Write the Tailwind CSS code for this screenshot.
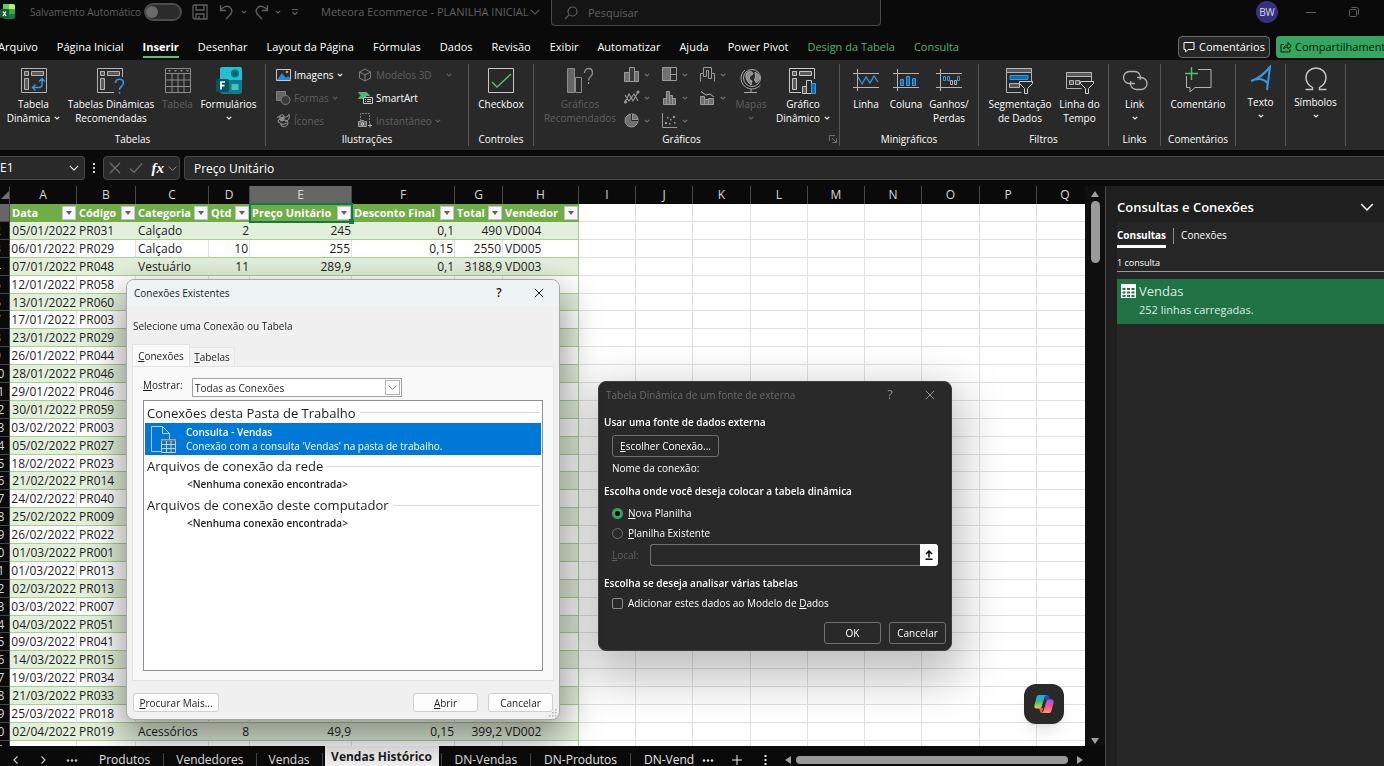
<!DOCTYPE html>
<html lang="pt-BR">
<head>
    <meta charset="UTF-8"/>
    <meta name="viewport" content="width=device-width, initial-scale=1.0"/>
    <title>Meteora Ecommerce - PLANILHA INICIAL</title>
    <script src="https://cdn.jsdelivr.net/npm/@tailwindcss/browser@4"></script>
</head>
<body class="h-screen flex flex-col overflow-hidden bg-[#0a0a0a] text-white text-[11px] leading-[14px] font-['Open_Sans','Noto_Sans',sans-serif]">

<!-- Símbolos reutilizados -->
<svg class="hidden">
    <symbol id="chev" viewBox="0 0 6 6"><path d="M.8 1.8 3 4 5.2 1.8" fill="none" stroke="currentColor" stroke-width="1.2"/></symbol>
    <symbol id="chevGrande" viewBox="0 0 12 12"><path d="M1 3.5 6 8.5 11 3.5" fill="none" stroke="currentColor" stroke-width="1.3"/></symbol>
    <symbol id="fechar" viewBox="0 0 12 12"><path d="M1 1 11 11M11 1 1 11" fill="none" stroke="currentColor" stroke-width="1.2"/></symbol>
</svg>

<!-- Barra de título -->
<header class="flex shrink-0 h-7 text-[#606060]">
    <div class="w-[551px] h-6 shrink-0 flex items-center">
        <svg class="w-4 h-4" viewBox="0 0 16 16">
            <rect x="3" y="0" width="12" height="15" rx="2" fill="#107c41"/>
            <path d="M3 0h6v5H3z" fill="#5ccb5a"/><path d="M9 0h4a2 2 0 0 1 2 2v3H9z" fill="#b9f06f"/>
            <path d="M9 5h6v5H9z" fill="#3aa64c"/>
            <rect x="0" y="5" width="9" height="9" rx="1.5" fill="#185c37"/>
            <path d="M3 7.5 6 12M6 7.5 3 12" stroke="#fff" stroke-width="1.3"/>
        </svg>
        <span class="ml-[14px] w-[110px] whitespace-nowrap text-[10px]">Salvamento Automático</span>
        <button class="ml-1 w-[38px] h-[18px] rounded-full border-2 border-[#4b4b4b] bg-[#2b2b2b] flex items-center" aria-label="Salvamento Automático">
            <span class="w-3 h-3 rounded-full bg-[#6b6b6b]"></span>
        </button>
        <button class="ml-[10px]" aria-label="Salvar">
            <svg class="w-4 h-4" viewBox="0 0 16 16" fill="none" stroke="currentColor" stroke-width="1.3"><path d="M1 2.5A1.5 1.5 0 0 1 2.500 1h12.500v14H2.500L1 13.500zM4 1v5h8V1M4 15v-5h8v5M7 12v3"/></svg>
        </button>
        <button class="ml-[11px] flex items-center gap-2" aria-label="Desfazer">
            <svg class="w-[14px] h-4" viewBox="0 0 14 16" fill="none" stroke="currentColor" stroke-width="1.4"><path d="M1.500 1v5.500H7M1.500 6.500C4 2.500 8 1 11 3.500s2 5.500 0 7.500l-4 4"/></svg>
            <svg class="w-[6px] h-[6px]"><use href="#chev"/></svg>
        </button>
        <button class="ml-2 flex items-center gap-[6px]" aria-label="Refazer">
            <svg class="w-[14px] h-4" viewBox="0 0 14 16" fill="none" stroke="currentColor" stroke-width="1.4"><path d="M12.500 1v5.500H7M12.500 6.500C10 2.500 6 1 3 3.500s-2 5.500 0 7.500l4 4"/></svg>
            <svg class="w-[6px] h-[6px]"><use href="#chev"/></svg>
        </button>
        <button class="ml-[10px]" aria-label="Personalizar">
            <svg class="w-2 h-2" viewBox="0 0 8 8" fill="none" stroke="currentColor" stroke-width="1.2"><path d="M1 1.500h6M1.500 4 4 6.500 6.500 4"/></svg>
        </button>
        <button class="ml-[22px] flex items-center gap-[2px] whitespace-nowrap">Meteora Ecommerce - PLANILHA INICIAL
            <svg class="w-[10px] h-[10px]"><use href="#chevGrande"/></svg>
        </button>
    </div>
    <label class="w-[330px] h-[26px] shrink-0 flex items-center gap-[10px] px-3 rounded-b-sm border border-t-0 border-[#484848] bg-[#141414]">
        <svg class="w-[14px] h-[14px]" viewBox="0 0 14 14" fill="none" stroke="currentColor" stroke-width="1.200"><circle cx="8.500" cy="5.500" r="4.500"/><path d="M5.300 8.700 1 13"/></svg>
        <input class="flex-1 outline-none text-[11px] placeholder:text-[#606060]" placeholder="Pesquisar" aria-label="Pesquisar"/>
    </label>
    <div class="h-6 ml-auto pr-[25px] flex items-center">
        <span class="w-[22px] h-[22px] rounded-full bg-[#37317a] text-[#d8d8f0] text-[10px] flex items-center justify-center">BW</span>
        <button class="ml-7 w-[10px] h-[10px] flex items-center" aria-label="Minimizar"><span class="w-full h-px bg-[#606060]"></span></button>
        <button class="ml-[33px]" aria-label="Restaurar">
            <svg class="w-[10px] h-[10px]" viewBox="0 0 10 10" fill="none" stroke="currentColor"><rect x=".5" y="2.500" width="7" height="7" rx="1"/><path d="M2.500.5h5a2 2 0 0 1 2 2v5"/></svg>
        </button>
    </div>
</header>

<!-- Guias da faixa de opções -->
<nav class="flex shrink-0 h-8 pt-[6px] items-center whitespace-nowrap text-[11px]">
    <div class="flex-1 min-w-0 flex items-center gap-[19px] -ml-[2px]">
        <a href="#">Arquivo</a>
        <a href="#">Página Inicial</a>
        <a href="#" class="font-bold border-b-2 border-[#54c382] pb-[2px] pt-1">Inserir</a>
        <a href="#">Desenhar</a>
        <a href="#">Layout da Página</a>
        <a href="#">Fórmulas</a>
        <a href="#">Dados</a>
        <a href="#">Revisão</a>
        <a href="#">Exibir</a>
        <a href="#">Automatizar</a>
        <a href="#">Ajuda</a>
        <a href="#">Power Pivot</a>
        <a href="#" class="text-[#4fb477]">Design da Tabela</a>
        <a href="#" class="text-[#4fb477]">Consulta</a>
    </div>
    <button class="w-[92px] h-[22px] rounded-sm border border-[#6a6a6a] bg-[#262626] flex items-center justify-center gap-1">
        <svg class="w-3 h-3" viewBox="0 0 12 12" fill="none" stroke="currentColor"><path d="M1 1.500h10v7H5L2.500 11V8.500H1z"/></svg>
        Comentários
    </button>
    <button class="ml-[6px] w-[108px] h-[22px] pl-1 rounded-l-sm bg-[#36a55f] text-[#06200f] flex items-center gap-[3px] overflow-hidden">
        <svg class="w-3 h-3 shrink-0" viewBox="0 0 12 12" fill="none" stroke="currentColor"><path d="M4 3.500H1v7.500h9V8M3.500 8c.5-3 2.500-4 4.500-4V1.500L11.300 5 8 8V6C6 6 4.500 6.500 3.500 8z"/></svg>
        Compartilhamento
    </button>
</nav>

<!-- Faixa de opções -->
<section class="flex shrink-0 h-[90px] bg-[#292929] py-1 text-center text-[10px] whitespace-nowrap">
    <div class="w-[266px] shrink-0 flex flex-col border-r border-[#565656]">
        <div class="flex flex-1 pt-[3px]">
            <button class="w-[67px] flex flex-col items-center">
                <svg class="w-[26px] h-[27px] mb-[3px]" viewBox="0 0 26 27" fill="none" stroke="#b4b4b4"><path d="M.5 1.500h25v24H.5z"/><path d="M3.500 4.500h4v4h-4zM10.500 4.500h12v4h-12zM3.500 11.500h4v11h-4z" fill="#5a5a5a"/><path d="M12 20.500h6a3 3 0 0 0 3-3v-5.500M14.500 17.500 11.500 20.500l3 3M18 14.500l3-3 3 3" stroke="#3a96dd" stroke-width="1.400"/></svg>
                <span>Tabela</span>
                <span class="flex items-center gap-1">Dinâmica <svg class="w-[6px] h-[6px]"><use href="#chev"/></svg></span>
            </button>
            <button class="w-[88px] flex flex-col items-center">
                <svg class="w-[28px] h-[27px] mb-[3px]" viewBox="0 0 28 27" fill="none" stroke="#b4b4b4"><path d="M17 25.500H.5v-24h25V10"/><path d="M3.500 4.500h4v4h-4zM10.500 4.500h12v4h-12zM3.500 11.500h4v11h-4z" fill="#5a5a5a"/><path d="M18.500 16c0-5 8-5 8 0 0 3-4 3.500-4 7M22.500 25v1.800" stroke="#3a96dd" stroke-width="1.600"/></svg>
                <span>Tabelas Dinâmicas</span>
                <span>Recomendadas</span>
            </button>
            <button class="w-[45px] flex flex-col items-center text-[#606060]">
                <svg class="w-[26px] h-[27px] mb-[3px]" viewBox="0 0 26 27" fill="none" stroke="#8c8c8c"><path d="M.5 1.500h25v24H.5zM.5 6.500h25M.5 13h25M.5 19.500h25M7 6.500v19M13 6.500v19M19 6.500v19"/><path d="M3 3h3L4.500 5zM9 3h3l-1.500 2zM15 3h3l-1.500 2zM21 3h3l-1.500 2z" fill="#8c8c8c" stroke="none"/></svg>
                <span>Tabela</span>
            </button>
            <button class="w-[57px] flex flex-col items-center">
                <svg class="w-[26px] h-[27px] mb-[3px]" viewBox="0 0 26 27"><rect x="4" y="0" width="22" height="27" rx="2.500" fill="#17788a"/><path d="M4 13V2.500A2.500 2.500 0 0 1 6.500 0h17A2.500 2.500 0 0 1 26 2.500V13z" fill="#25c0d0"/><circle cx="19" cy="6.500" r="4" fill="#0f7584"/><circle cx="19" cy="6.500" r="2" fill="#0b5967"/><rect x="15.500" y="17" width="7" height="6" fill="#3bc9c0"/><rect x="0" y="12" width="13" height="13" rx="1.500" fill="#0a5262"/><path d="M5 22.500v-7.500h4M5 18.700h3.500" fill="none" stroke="#fff" stroke-width="1.700"/></svg>
                <span>Formulários</span>
                <svg class="w-[6px] h-[6px] mt-1"><use href="#chev"/></svg>
            </button>
        </div>
        <p>Tabelas</p>
    </div>

    <div class="w-[203px] shrink-0 flex flex-col border-r border-[#565656]">
        <div class="flex-1 grid grid-cols-[82px_1fr] grid-rows-3 pl-[10px]">
            <button class="flex items-center gap-[3px]">
                <svg class="w-[15px] h-3" viewBox="0 0 15 12"><path d="M.5.5h14v11H.5z" fill="#292929" stroke="#c8c8c8"/><path d="M1 11 6 4l4 5 2-2 2.500 3v1z" fill="#2b88d8"/><circle cx="11" cy="3" r="1.300" fill="#f0a030"/></svg>
                Imagens <svg class="w-[6px] h-[6px]"><use href="#chev"/></svg>
            </button>
            <button class="flex items-center gap-1 text-[#606060]">
                <svg class="w-[14px] h-[14px]" viewBox="0 0 14 14" fill="none" stroke="#808080"><path d="M7 1 12.500 4v6L7 13 1.500 10V4zM1.500 4 7 7l5.500-3M7 7v6"/></svg>
                Modelos 3D <svg class="w-[6px] h-[6px] ml-[10px]"><use href="#chev"/></svg>
            </button>
            <button class="flex items-center gap-[3px] text-[#606060]">
                <svg class="w-[15px] h-[14px]" viewBox="0 0 15 14" fill="#3a3a3a" stroke="#808080"><path d="M.5.5h9v9h-9z" fill="#666"/><circle cx="9.500" cy="9" r="4.500"/></svg>
                Formas <svg class="w-[6px] h-[6px]"><use href="#chev"/></svg>
            </button>
            <button class="flex items-center gap-[3px]">
                <svg class="w-[15px] h-3" viewBox="0 0 15 12" fill="none"><path d="M.5.5h8l3 3H8l-1 3H.5L3 3.500z" fill="#4fb477" stroke="#4fb477"/><path d="M5.500 5.500h9v6h-9z" fill="#292929" stroke="#c8c8c8"/><path d="M7 7.500h1M9 7.500h4M7 9.500h1M9 9.500h4" stroke="#c8c8c8"/></svg>
                SmartArt
            </button>
            <button class="flex items-center gap-[3px] text-[#606060]">
                <svg class="w-[15px] h-[15px]" viewBox="0 0 15 15" fill="none" stroke="#8c8c8c" stroke-width="1.100"><path d="M1 4.500 4 3c1-2 4-1.500 4 1 2 1 4-1 5-2.500 1 4-1 6-3.500 7M4 3v3c-2 1-3 3 0 4M6 8c3-2 7 0 5.500 3.500C9 15 5 14 4.500 10.500c1.500 1 4 1 6-.5"/><path d="M8 4c1 2-1 4-3 4L4 5z" fill="#8c8c8c"/></svg>
                Ícones
            </button>
            <button class="flex items-center gap-[3px] text-[#606060]">
                <svg class="w-[15px] h-[15px]" viewBox="0 0 15 15" fill="none" stroke="#808080"><path d="M2.500 8V.5h9V10" stroke-dasharray="2 1"/><path d="M.5 8.500h2l1-1h2l1 1h2v5h-8z" fill="#666" stroke="#a0a0a0"/><circle cx="4.500" cy="11" r="1.300" stroke="#d0d0d0"/><path d="M12 10.500v4M10 12.500h4" stroke="#b0b0b0"/></svg>
                Instantâneo <svg class="w-[6px] h-[6px]"><use href="#chev"/></svg>
            </button>
        </div>
        <p>Ilustrações</p>
    </div>

    <div class="w-[65px] shrink-0 flex flex-col border-r border-[#565656]">
        <div class="flex-1 flex justify-center pt-[3px]">
            <button class="flex flex-col items-center">
                <svg class="w-[26px] h-[27px] mb-[3px]" viewBox="0 0 26 27" fill="none" stroke="#c8c8c8"><path d="M.5 1.500h25v24H.5z"/><path d="M4 15l5 5L23 7" stroke="#4fc36e" stroke-width="1.400"/></svg>
                <span>Checkbox</span>
            </button>
        </div>
        <p>Controles</p>
    </div>

    <div class="w-[306px] shrink-0 flex flex-col border-r border-[#565656]">
        <div class="flex-1 flex pt-[3px] pl-2">
            <button class="w-[76px] flex flex-col items-center text-[#606060]">
                <svg class="w-[26px] h-[27px] mb-[3px]" viewBox="0 0 26 27" fill="#666" stroke="#8c8c8c"><path d="M.5 1.500h7v24h-7z"/><path d="M8.500 10.500h6v15h-6z" fill="none"/><path d="M17.500 6c0-6 8-6 8 0 0 3.500-4 3.500-4 7.500M21.500 15v2" fill="none" stroke-width="1.400"/></svg>
                <span>Gráficos</span>
                <span>Recomendados</span>
            </button>
            <div class="grid grid-cols-3 gap-x-3 gap-y-2 content-start ml-[6px] text-[#707070]">
                <button class="flex items-center gap-1" aria-label="Colunas">
                    <svg class="w-4 h-[15px]" viewBox="0 0 16 15" fill="#3a3a3a" stroke="#9a9a9a"><path d="M.5 5.500h5v9h-5z" fill="#707070"/><path d="M5.500.5h5v14h-5z"/><path d="M10.500 4.500h4v10h-4z" fill="#707070"/></svg>
                    <svg class="w-[6px] h-[6px]"><use href="#chev"/></svg>
                </button>
                <button class="flex items-center gap-1" aria-label="Hierarquia">
                    <svg class="w-4 h-[15px]" viewBox="0 0 16 15" fill="#707070" stroke="#9a9a9a"><path d="M.5.5h8v13h-8z"/><path d="M8.500.5h6v7h-6zM8.500 7.500h6v6h-6z" fill="none"/></svg>
                    <svg class="w-[6px] h-[6px]"><use href="#chev"/></svg>
                </button>
                <button class="flex items-center gap-1" aria-label="Cascata">
                    <svg class="w-4 h-[15px]" viewBox="0 0 16 15" fill="#3a3a3a" stroke="#9a9a9a"><path d="M.5 14.500v-8h3v-6h8v6h3v8M3.500 6.500v3h3v-6h2v8h3v-5" fill="none"/></svg>
                    <svg class="w-[6px] h-[6px]"><use href="#chev"/></svg>
                </button>
                <button class="flex items-center gap-1" aria-label="Linhas">
                    <svg class="w-4 h-[15px]" viewBox="0 0 16 15" fill="none" stroke="#9a9a9a" stroke-width="1.100"><path d="M1 12 5 4l4 7 5-9M1 5l4 6 5-7 4 7"/><circle cx="1.500" cy="12" r="1" fill="#9a9a9a"/><circle cx="14" cy="2" r="1" fill="#9a9a9a"/></svg>
                    <svg class="w-[6px] h-[6px]"><use href="#chev"/></svg>
                </button>
                <button class="flex items-center gap-1" aria-label="Estatística">
                    <svg class="w-4 h-[15px]" viewBox="0 0 16 15" fill="#707070" stroke="#9a9a9a"><path d="M1.500 8.500h3v6h-3zM4.500 1.500h3v13h-3zM7.500 5.500h3v9h-3zM10.500 8.500h3v6h-3z"/></svg>
                    <svg class="w-[6px] h-[6px]"><use href="#chev"/></svg>
                </button>
                <button class="flex items-center gap-1" aria-label="Combinação">
                    <svg class="w-4 h-[15px]" viewBox="0 0 16 15" fill="#707070" stroke="#9a9a9a"><path d="M.5 6.500h4v8h-4zM4.500 9.500h4v5h-4zM8.500 8.500h5v6h-5z"/><path d="M1 1.500 6 5l4-1 4 3" fill="none" stroke="#b4b4b4"/></svg>
                    <svg class="w-[6px] h-[6px]"><use href="#chev"/></svg>
                </button>
                <button class="flex items-center gap-1" aria-label="Pizza">
                    <svg class="w-4 h-[15px]" viewBox="0 0 16 15" fill="#707070" stroke="#9a9a9a"><circle cx="7.500" cy="7.500" r="6.500"/><path d="M7.500 1v6.500H14" fill="none" stroke="#292929"/><path d="M8.500 1A6 6 0 0 1 14 6.500H8.500z"/></svg>
                    <svg class="w-[6px] h-[6px]"><use href="#chev"/></svg>
                </button>
                <button class="flex items-center gap-1" aria-label="Dispersão">
                    <svg class="w-4 h-[15px]" viewBox="0 0 16 15" fill="#9a9a9a"><path d="M.5 0v14.500H15" fill="none" stroke="#9a9a9a"/><path d="M3 9h2v2H3zM5 4h1.500v1.500H5zM8 6h1.500v1.500H8zM7 10h1.500v1.500H7zM11 3h2v2h-2zM12 9h1.500v1.500H12z"/></svg>
                    <svg class="w-[6px] h-[6px]"><use href="#chev"/></svg>
                </button>
            </div>
            <button class="w-[50px] flex flex-col items-center text-[#606060]">
                <svg class="w-[26px] h-[27px] mb-[3px]" viewBox="0 0 26 27" fill="none" stroke="#a8a8a8"><circle cx="14" cy="11" r="8.500"/><path d="M7 3C1 8 2 17 8.500 20.500c5 3 11 1 14-2.500M13 22v3.500M6 25.500h13"/><path d="M8 7c2-3 5-3 6-2l1 2-3 2-1 3 3 2-1 4-3-3-2-4zM17 5l4 3 .5 4-3 4-2-3 1-3z" fill="#8c8c8c"/></svg>
                <span>Mapas</span>
                <svg class="w-[6px] h-[6px] mt-1"><use href="#chev"/></svg>
            </button>
            <button class="w-[54px] flex flex-col items-center">
                <svg class="w-[28px] h-[27px] mb-[3px]" viewBox="0 0 28 27" fill="none" stroke="#c8c8c8"><path d="M12 25.500H.5v-24h25V12"/><path d="M3.500 4.500h4v4h-4zM10.500 4.500h12v4h-12zM3.500 11.500h4v11h-4z" fill="#5a5a5a"/><path d="M13.500 19.500h4v7h-4z" fill="#5a5a5a"/><path d="M17.500 13.500h5v13h-5z" fill="#292929"/><path d="M22.500 16.500h4v10h-4z" fill="#0f6cbd" stroke="#3a96dd"/></svg>
                <span>Gráfico</span>
                <span class="flex items-center gap-1">Dinâmico <svg class="w-[6px] h-[6px]"><use href="#chev"/></svg></span>
            </button>
        </div>
        <div class="flex items-center pr-[2px]">
            <p class="flex-1">Gráficos</p>
            <button aria-label="Mais opções de gráficos"><svg class="w-2 h-2" viewBox="0 0 8 8" fill="none" stroke="#707070"><path d="M.5 6V.5H6M3 3l4 4M7.500 3.500v4h-4"/></svg></button>
        </div>
    </div>

    <div class="w-[139px] shrink-0 flex flex-col border-r border-[#565656]">
        <div class="flex-1 flex pt-[3px] pl-[6px]">
            <button class="w-[40px] flex flex-col items-center">
                <svg class="w-[26px] h-[27px] mb-[3px]" viewBox="0 0 26 27" fill="none" stroke="#b4b4b4"><path d="M0 6.500h26M0 20.500h26M4.500 2v22"/><path d="M5 10l4 7 4-7 4 6 4-7 4 6" stroke="#3a96dd" stroke-width="1.300"/></svg>
                <span>Linha</span>
            </button>
            <button class="w-[40px] flex flex-col items-center">
                <svg class="w-[26px] h-[27px] mb-[3px]" viewBox="0 0 26 27" fill="none" stroke="#b4b4b4"><path d="M0 6.500h26M0 20.500h26M4.500 2v22"/><path d="M7.500 12.500h3v6h-3zM13.500 9.500h3v9h-3zM19.500 11.500h3v7h-3z" fill="#0f6cbd" stroke="#3a96dd"/></svg>
                <span>Coluna</span>
            </button>
            <button class="w-[46px] flex flex-col items-center">
                <svg class="w-[26px] h-[27px] mb-[3px]" viewBox="0 0 26 27" fill="none" stroke="#b4b4b4"><path d="M0 6.500h26M0 20.500h26M4.500 2v22"/><path d="M7.500 9.500h2v4h-2zM11.500 9.500h2v4h-2zM21.500 9.500h2v4h-2z" stroke="#3a96dd"/><path d="M14.500 13.500h2v4h-2zM18.500 13.500h2v4h-2z"/></svg>
                <span>Ganhos/</span>
                <span>Perdas</span>
            </button>
        </div>
        <p>Minigráficos</p>
    </div>

    <div class="w-[130px] shrink-0 flex flex-col border-r border-[#565656]">
        <div class="flex-1 flex pt-[3px] pl-2">
            <button class="w-[66px] flex flex-col items-center">
                <svg class="w-[28px] h-[27px] mb-[3px]" viewBox="0 0 28 27" fill="none" stroke="#b4b4b4"><path d="M25.500 14V1.500H.5v24h15"/><path d="M.5 1.500h25v4H.5zM3.500 16.500h10v4h-10z" fill="#5a5a5a"/><path d="M4 8.500h18v4H4z" fill="#0f6cbd" stroke="#3a96dd"/><path d="M13.500 14.500h13v2l-5 5v5h-3v-5l-5-5z" fill="#292929" stroke="#d0d0d0"/></svg>
                <span>Segmentação</span>
                <span>de Dados</span>
            </button>
            <button class="w-[53px] flex flex-col items-center">
                <svg class="w-[28px] h-[27px] mb-[3px]" viewBox="0 0 28 27" fill="none" stroke="#b4b4b4"><path d="M25.500 14V5.500H.5v16h15"/><path d="M.5 5.500h25v4H.5zM3.500 13.500h4v4h-4zM9.500 13.500h4v4h-4z" fill="#5a5a5a"/><path d="M14.500 14.500h13v2l-5 5v5h-3v-5l-5-5z" fill="#292929" stroke="#d0d0d0"/></svg>
                <span>Linha do</span>
                <span>Tempo</span>
            </button>
        </div>
        <p>Filtros</p>
    </div>

    <div class="w-[52px] shrink-0 flex flex-col border-r border-[#565656]">
        <div class="flex-1 flex justify-center pt-[3px]">
            <button class="flex flex-col items-center">
                <svg class="w-[26px] h-[27px] mb-[3px]" viewBox="0 0 26 27" fill="none" stroke="#b4b4b4" stroke-width="1.300"><path d="M13 16.500H7.500a6 6 0 0 1 0-12h5a6 6 0 0 1 5.500 8.500"/><path d="M15 10.500h4a6 6 0 0 1 0 12h-4.500a6 6 0 0 1-5.500-8.500"/></svg>
                <span>Link</span>
                <svg class="w-[6px] h-[6px] mt-1"><use href="#chev"/></svg>
            </button>
        </div>
        <p>Links</p>
    </div>

    <div class="w-[75px] shrink-0 flex flex-col border-r border-[#565656]">
        <div class="flex-1 flex justify-center pt-[3px]">
            <button class="flex flex-col items-center">
                <svg class="w-[28px] h-[27px] mb-[3px]" viewBox="0 0 28 27" fill="none" stroke="#b4b4b4"><path d="M14 2.500h13v18H11l-5 4.500v-4.500H2.500V9"/><path d="M7.500 0v13M1 6.500h13" stroke="#4fc36e" stroke-width="1.400"/></svg>
                <span>Comentário</span>
            </button>
        </div>
        <p>Comentários</p>
    </div>

    <div class="w-[50px] shrink-0 flex justify-center border-r border-[#565656] pt-px">
        <button class="flex flex-col items-center self-start">
            <svg class="w-[24px] h-[27px] mb-[3px]" viewBox="0 0 24 27" fill="none" stroke="#3a96dd" stroke-width="2"><path d="M2 16C10 14 15 9 21 2l-3 23M7 14.500c4-1 8 0 11.500 3.500"/></svg>
            <span>Texto</span>
            <svg class="w-[6px] h-[6px] mt-1"><use href="#chev"/></svg>
        </button>
    </div>
    <div class="w-[60px] shrink-0 flex justify-center border-r border-[#565656] pt-px">
        <button class="flex flex-col items-center self-start">
            <svg class="w-[24px] h-[27px] mb-[3px]" viewBox="0 0 24 27" fill="none" stroke="#c8c8c8" stroke-width="1.400"><path d="M1.500 24.500h7v-2C4 20 2 16.500 2 12.500a10 9.500 0 0 1 20 0c0 4-2 7.500-6.500 10v2h7"/></svg>
            <span>Símbolos</span>
            <svg class="w-[6px] h-[6px] mt-1"><use href="#chev"/></svg>
        </button>
    </div>
</section>

<!-- Barra de fórmulas -->
<section class="flex shrink-0 h-9 items-center text-[12px]">
    <button class="w-[85px] h-6 shrink-0 pr-[5px] flex items-center justify-between rounded-r-sm border border-l-0 border-[#484848] bg-[#292929]">E1
        <svg class="w-[10px] h-[10px]"><use href="#chevGrande"/></svg>
    </button>
    <svg class="w-[18px] h-3 shrink-0" viewBox="0 0 18 12" fill="#d0d0d0"><path d="M8 1h2v2H8zM8 5h2v2H8zM8 9h2v2H8z"/></svg>
    <div class="w-[77px] h-6 shrink-0 pl-[5px] pr-[2px] flex items-center justify-between rounded-sm border border-[#484848] bg-[#292929]">
        <button class="text-[#707070]" aria-label="Cancelar entrada"><svg class="w-3 h-3"><use href="#fechar"/></svg></button>
        <button class="text-[#707070]" aria-label="Inserir entrada"><svg class="w-[14px] h-3" viewBox="0 0 14 12" fill="none" stroke="currentColor" stroke-width="1.200"><path d="M1 6.500 5 10.500 13 1.500"/></svg></button>
        <button class="flex items-center gap-1 text-[15px] font-bold italic font-['Liberation_Serif',serif]">fx
            <svg class="w-[9px] h-[9px] text-[#909090]"><use href="#chevGrande"/></svg>
        </button>
    </div>
    <input class="flex-1 h-6 ml-1 px-[9px] outline-none rounded-l-sm border border-r-0 border-[#484848] bg-[#292929]" value="Preço Unitário" aria-label="Barra de fórmulas"/>
</section>

<main class="flex flex-1 min-h-0">
    <div class="flex-1 min-w-0 flex flex-col">
        <div class="flex-1 min-h-0 flex">
            <!-- Planilha -->
            <div id="planilha" class="flex-1 min-w-0 overflow-hidden bg-white text-[#1c1c1c]">
                <table class="table-fixed w-0 -ml-[14px] border-separate border-spacing-0 leading-4 whitespace-nowrap">
                    <colgroup id="colunas"></colgroup>
                    <thead id="letras"></thead>
                    <tbody id="linhas"></tbody>
                </table>
            </div>
            <div class="w-5 shrink-0 pt-1 pb-px flex flex-col items-center bg-[#0f0f0f]">
                <svg class="w-[10px] h-[8px]" viewBox="0 0 10 8"><path d="M5 1 9 7H1z" fill="#a0a0a0"/></svg>
                <div class="mt-[3px] w-[9px] h-[62px] rounded-full bg-[#9a9a9a]"></div>
                <svg class="mt-auto w-[10px] h-[8px]" viewBox="0 0 10 8"><path d="M5 7 9 1H1z" fill="#a0a0a0"/></svg>
            </div>
        </div>
        <!-- Guias das planilhas -->
        <div class="h-5 shrink-0 overflow-hidden">
            <div class="h-7 flex items-center text-[12px] whitespace-nowrap text-[#e6e6e6]">
                <div class="w-[86px] shrink-0 flex items-center justify-between pl-3 pr-2 text-[#c8c8c8]">
                    <button aria-label="Anterior"><svg class="w-2 h-2" viewBox="0 0 8 8" fill="none" stroke="currentColor" stroke-width="1.200"><path d="M5.500.5 2 4l3.500 3.500"/></svg></button>
                    <button aria-label="Próxima"><svg class="w-2 h-2" viewBox="0 0 8 8" fill="none" stroke="currentColor" stroke-width="1.200"><path d="M2.500.5 6 4 2.500 7.500"/></svg></button>
                    <button aria-label="Todas as planilhas"><svg class="w-3 h-[3px]" viewBox="0 0 12 3" fill="currentColor"><circle cx="2" cy="1.500" r="1.200"/><circle cx="6" cy="1.500" r="1.200"/><circle cx="10" cy="1.500" r="1.200"/></svg></button>
                </div>
                <a href="#" class="px-[13px] border-r border-[#484848]">Produtos</a>
                <a href="#" class="px-3 border-r border-[#484848]">Vendedores</a>
                <a href="#" class="px-3 border-r border-[#484848]">Vendas</a>
                <a href="#" class="mx-[2px] w-[114px] h-7 pt-1 text-center font-bold text-[#1c1c1c] bg-[#f5f5f5]">Vendas Histórico</a>
                <a href="#" class="px-[13px] border-x border-[#484848]">DN-Vendas</a>
                <a href="#" class="px-[13px] border-r border-[#484848]">DN-Produtos</a>
                <a href="#" class="pl-[13px] pr-2">DN-Vend</a>
                <button aria-label="Mais planilhas"><svg class="w-3 h-[3px]" viewBox="0 0 12 3" fill="currentColor"><circle cx="2" cy="1.500" r="1.200"/><circle cx="6" cy="1.500" r="1.200"/><circle cx="10" cy="1.500" r="1.200"/></svg></button>
                <button class="ml-[18px]" aria-label="Nova planilha"><svg class="w-[10px] h-[10px]" viewBox="0 0 10 10" stroke="currentColor"><path d="M5 0v10M0 5h10"/></svg></button>
                <svg class="ml-[22px] w-[3px] h-[10px] shrink-0" viewBox="0 0 3 10" fill="currentColor"><path d="M.5 0h2v2h-2zM.5 4h2v2h-2zM.5 8h2v2h-2z"/></svg>
                <div class="flex-1 ml-[17px] pr-[21px] flex items-center gap-1">
                    <svg class="w-2 h-[10px] shrink-0" viewBox="0 0 8 10"><path d="M7 1 1 5l6 4z" fill="#a0a0a0"/></svg>
                    <div class="flex-1 h-2 rounded-full bg-[#9a9a9a]"></div>
                    <svg class="w-2 h-[10px] ml-1 shrink-0" viewBox="0 0 8 10"><path d="M1 1 7 5 1 9z" fill="#a0a0a0"/></svg>
                </div>
            </div>
        </div>
    </div>

    <!-- Painel Consultas e Conexões -->
    <aside class="w-[279px] shrink-0 flex flex-col pl-[11px] border-l border-[#484848] bg-[#1f1f1f]">
        <div class="h-9 flex items-center justify-between pt-[6px] pr-[10px]">
            <h2 class="text-[13px] leading-4 font-semibold">Consultas e Conexões</h2>
            <button aria-label="Recolher painel"><svg class="w-[14px] h-[14px]"><use href="#chevGrande"/></svg></button>
        </div>
        <div class="flex-1 bg-[#262626]">
            <div class="flex pt-[6px] text-[10px]">
                <a href="#" class="font-bold border-b-3 border-white pb-[3px]">Consultas</a>
                <a href="#" class="h-4 ml-[7px] pl-[7px] border-l border-[#8c8c8c]">Conexões</a>
            </div>
            <p class="mt-2 pb-px border-b border-[#9a9a9a] text-[9px]">1 consulta</p>
            <button class="mt-[7px] w-full h-[45px] pl-1 flex items-start gap-[3px] text-left bg-[#217346] text-[#dcebe1]">
                <svg class="mt-[5px] w-[15px] h-[14px]" viewBox="0 0 15 14"><rect width="15" height="14" fill="#fff"/><path d="M1.500 4h3v2h-3zM6 4h3v2H6zM10.500 4h3v2h-3zM1.500 7.500h3v2h-3zM6 7.500h3v2H6zM10.500 7.500h3v2h-3zM1.500 11h3v2h-3zM6 11h3v2H6zM10.500 11h3v2h-3z" fill="#217346"/></svg>
                <span class="pt-1">
                    <span class="block text-[13px] leading-4 mb-1">Vendas</span>
                    <span class="block">252 linhas carregadas.</span>
                </span>
            </button>
        </div>
    </aside>
</main>

<button class="fixed left-[1024px] bottom-[42px] w-10 h-10 rounded-xl bg-[#292929] shadow-lg flex items-center justify-center" aria-label="Copilot">
    <svg class="w-5 h-5" viewBox="0 0 20 20">
        <defs>
            <linearGradient id="copA" x1="0" y1="0" x2="0" y2="1"><stop offset="0" stop-color="#1ea7f0"/><stop offset=".5" stop-color="#3cb88c"/><stop offset="1" stop-color="#f2d01c"/></linearGradient>
            <linearGradient id="copB" x1="0" y1="0" x2="0" y2="1"><stop offset="0" stop-color="#a34ff0"/><stop offset=".5" stop-color="#f0569a"/><stop offset="1" stop-color="#ff9a5a"/></linearGradient>
        </defs>
        <path d="M10 1h3c2 0 2 1.500 2.500 3S16.500 6 18 6h-6z" fill="#1b4fd0"/>
        <path d="M5 14h4l-1 5C5.500 19 6 15 5 14z" fill="#f2603c"/>
        <path d="M5 1h8c-2 0-2.500 2-3.200 4.500L8 12c-.6 2-1.500 2.500-3 2.500H2.500C.5 14.500 0 13 .5 11L2.500 3.500C3 1.500 4 1 5 1z" fill="url(#copA)"/>
        <path d="M15 19H7c2 0 2.500-2 3.200-4.500L12 8c.6-2 1.500-2.500 3-2.500h2.500c2 0 2.500 1.500 2 3.500l-2 7.500c-.5 2-1.500 2.500-2.500 2.500z" fill="url(#copB)"/>
    </svg>
</button>

<!-- Diálogo: Tabela Dinâmica de fonte externa -->
<section class="fixed left-[598px] top-[381px] w-[354px] h-[270px] px-[5px] flex flex-col rounded-lg border border-[#3c3c3c] bg-[#292929] shadow-[0_18px_45px_10px_rgba(0,0,0,0.25)] text-[10px]">
    <div class="h-[26px] shrink-0 pl-[2px] flex items-center text-[#6a6a6a]">
        <h2 class="flex-1">Tabela Dinâmica de um fonte de externa</h2>
        <button class="w-[10px] text-[12px] text-[#909090]">?</button>
        <button class="ml-[30px] mr-[11px] text-[#909090]" aria-label="Fechar"><svg class="w-[10px] h-[10px]"><use href="#fechar"/></svg></button>
    </div>
    <h3 class="mt-[7px] font-semibold">Usar uma fonte de dados externa</h3>
    <button class="mt-[6px] ml-2 w-[107px] h-[22px] shrink-0 rounded-[3px] border border-[#707070]"><u>E</u>scolher Conexão...</button>
    <p class="mt-1 ml-2">Nome da conexão:</p>
    <h3 class="mt-[9px] font-semibold">Escolha onde você deseja colocar a tabela dinâmica</h3>
    <label class="mt-2 ml-2 flex items-center gap-[5px]"><input type="radio" name="destino" checked class="appearance-none w-[11px] h-[11px] rounded-full border border-[#707070] checked:border-3 checked:border-[#36a55f] checked:bg-[#0a0a0a]"/><span><u>N</u>ova Planilha</span></label>
    <label class="mt-[6px] ml-2 flex items-center gap-[5px]"><input type="radio" name="destino" class="appearance-none w-[11px] h-[11px] rounded-full border border-[#707070] checked:border-3 checked:border-[#36a55f] checked:bg-[#0a0a0a]"/><span><u>P</u>lanilha Existente</span></label>
    <div class="mt-1 mx-2 h-[22px] shrink-0 flex items-center">
        <label for="local" class="w-[38px] text-[#606060]"><u>L</u>ocal:</label>
        <input id="local" class="flex-1 h-[22px] px-1 outline-none rounded-l-[3px] border border-r-0 border-[#707070]"/>
        <button class="w-[18px] h-[22px] rounded-r-[3px] bg-white text-black flex items-center justify-center" aria-label="Selecionar intervalo">
            <svg class="w-2 h-[10px]" viewBox="0 0 8 10" fill="none" stroke="currentColor" stroke-width="1.500"><path d="M4 7.500V1M1 4l3-3 3 3M.5 9.300h7"/></svg>
        </button>
    </div>
    <h3 class="mt-[10px] font-semibold">Escolha se deseja analisar várias tabelas</h3>
    <label class="mt-[6px] ml-2 flex items-center gap-[5px]"><input type="checkbox" class="appearance-none w-[11px] h-[11px] rounded-xs border border-[#8c8c8c] checked:bg-[#36a55f]"/><span>Adicionar estes dados ao Modelo de <u>D</u>ados</span></label>
    <div class="mt-auto mb-[6px] flex justify-end gap-2">
        <button class="w-[57px] h-[22px] rounded-[3px] border border-[#707070]">OK</button>
        <button class="w-[57px] h-[22px] rounded-[3px] border border-[#707070]">Cancelar</button>
    </div>
</section>

<!-- Diálogo: Conexões Existentes -->
<section class="fixed left-[126px] top-[279px] w-[434px] h-[441px] flex flex-col rounded-lg border border-[#a8a8a8] bg-[#f0f0f0] shadow-[0_16px_36px_4px_rgba(0,0,0,0.4)] text-[#1c1c1c] text-[10px]">
    <div class="h-[26px] shrink-0 pl-[7px] flex items-center rounded-t-lg bg-[#eef4f4]">
        <h2 class="flex-1">Conexões Existentes</h2>
        <button class="w-[10px] text-[12px] font-semibold">?</button>
        <button class="ml-[30px] mr-[15px]" aria-label="Fechar"><svg class="w-[10px] h-[10px]"><use href="#fechar"/></svg></button>
    </div>
    <p class="mt-[13px] ml-[6px]">Selecione uma Conexão ou Tabela</p>
    <div class="mt-[11px] ml-[5px] flex items-end">
        <button class="w-[58px] h-[22px] border border-b-0 border-[#e3e3e3] bg-[#f9f9f9]"><u>C</u>onexões</button>
        <button class="w-[45px] h-[19px] border border-b-0 border-l-0 border-[#e6e6e6] bg-[#f3f3f3]"><u>T</u>abelas</button>
    </div>
    <div class="mx-[5px] flex-1 min-h-0 flex flex-col px-[10px] pt-[11px] pb-[9px] border border-[#e3e3e3] bg-[#f9f9f9]">
        <div class="flex items-start">
            <label for="mostrar" class="w-[49px]"><u>M</u>ostrar:</label>
            <div class="relative">
                <select id="mostrar" class="block appearance-none w-[210px] h-[19px] pl-[2px] border border-[#a0a0a0] bg-white"><option>Todas as Conexões</option></select>
                <span class="absolute right-[2px] top-[2px] w-[15px] h-[15px] border border-[#b4b4b4] bg-white text-[#707070] flex items-center justify-center pointer-events-none"><svg class="w-[9px] h-[9px]"><use href="#chevGrande"/></svg></span>
            </div>
        </div>
        <div class="mt-[3px] flex-1 p-px border border-[#8c8f98] bg-white">
            <h3 class="h-[21px] pl-[2px] pr-px flex items-center gap-1 text-[13px] after:flex-1 after:h-px after:bg-[#dcdcdc]">Conexões desta Pasta de Trabalho</h3>
            <button class="w-full h-8 pl-[6px] flex items-center gap-[10px] text-left bg-[#0078d7] text-white">
                <svg class="w-[25px] h-7" viewBox="0 0 25 28" fill="none" stroke="#b8cfe6"><path d="M10 26.500H.5v-25h11l7 7V14M11.500 1.500v7h7"/><path d="M10.500 14.500h14v13h-14z" fill="#0078d7" stroke="#d0d0d0"/><path d="M10.500 15.500h14" stroke="#8a7a70" stroke-width="2"/><path d="M10.500 19.500h14M10.500 23.500h14M15.500 16v11M20 16v11" stroke="#d0d0d0"/></svg>
                <span>
                    <span class="block font-semibold">Consulta - Vendas</span>
                    <span class="block">Conexão com a consulta 'Vendas' na pasta de trabalho.</span>
                </span>
            </button>
            <h3 class="h-[22px] pl-[2px] pr-px flex items-center gap-1 text-[13px] after:flex-1 after:h-px after:bg-[#dcdcdc]">Arquivos de conexão da rede</h3>
            <p class="h-[17px] pl-[42px] font-semibold">&lt;Nenhuma conexão encontrada&gt;</p>
            <h3 class="h-[22px] pl-[2px] pr-px flex items-center gap-1 text-[13px] after:flex-1 after:h-px after:bg-[#dcdcdc]">Arquivos de conexão deste computador</h3>
            <p class="h-[17px] pl-[42px] font-semibold">&lt;Nenhuma conexão encontrada&gt;</p>
        </div>
    </div>
    <div class="h-[38px] shrink-0 px-[6px] pt-3 flex items-start">
        <button class="w-[86px] h-[19px] rounded-[3px] border border-[#cfcfcf] bg-[#fdfdfd]"><u>P</u>rocurar Mais...</button>
        <button class="ml-auto w-[65px] h-[19px] rounded-[3px] border border-[#cfcfcf] bg-[#fdfdfd]"><u>A</u>brir</button>
        <button class="ml-[10px] w-[65px] h-[19px] rounded-[3px] border border-[#cfcfcf] bg-[#fdfdfd]">Cancelar</button>
    </div>
    <svg class="absolute right-[2px] bottom-[2px] w-2 h-2" viewBox="0 0 8 8" fill="#b4b4b4"><path d="M6 0h1.500v1.500H6zM3 3h1.500v1.500H3zM6 3h1.500v1.500H6zM0 6h1.500v1.500H0zM3 6h1.500v1.500H3zM6 6h1.500v1.500H6z"/></svg>
</section>

<script>
    const larguras = [24, 67, 59, 73, 41, 102, 103, 48, 76];
    const titulos = ["Data", "Código", "Categoria", "Qtd", "Preço Unitário", "Desconto Final", "Total", "Vendedor"];
    const vendas = [
        ["05/01/2022", "PR031", "Calçado", "2", "245", "0,1", "490", "VD004"],
        ["06/01/2022", "PR029", "Calçado", "10", "255", "0,15", "2550", "VD005"],
        ["07/01/2022", "PR048", "Vestuário", "11", "289,9", "0,1", "3188,9", "VD003"],
        ["12/01/2022", "PR058"], ["13/01/2022", "PR060"], ["17/01/2022", "PR003"], ["23/01/2022", "PR029"],
        ["26/01/2022", "PR044"], ["28/01/2022", "PR046"], ["29/01/2022", "PR046"], ["30/01/2022", "PR059"],
        ["03/02/2022", "PR003"], ["05/02/2022", "PR027"], ["18/02/2022", "PR023"], ["21/02/2022", "PR014"],
        ["24/02/2022", "PR040"], ["25/02/2022", "PR009"], ["26/02/2022", "PR022"], ["01/03/2022", "PR001"],
        ["01/03/2022", "PR013"], ["02/03/2022", "PR013"], ["03/03/2022", "PR007"], ["04/03/2022", "PR051"],
        ["09/03/2022", "PR041"], ["14/03/2022", "PR015"], ["19/03/2022", "PR034"], ["21/03/2022", "PR033"],
        ["25/03/2022", "PR018"],
        ["02/04/2022", "PR019", "Acessórios", "8", "49,9", "0,15", "399,2", "VD002"],
        []
    ];
    const direita = [0, 3, 4, 5, 6]; // colunas alinhadas à direita

    // Completa com colunas vazias até preencher a área visível
    const visivel = document.getElementById("planilha").clientWidth + 14;
    let soma = larguras.reduce((a, b) => a + b, 0);
    while (soma < visivel && larguras.length < 27) {
        const l = larguras.length % 4 === 3 ? 58 : 57;
        larguras.push(l);
        soma += l;
    }

    document.getElementById("colunas").innerHTML = larguras.map(l => `<col style="width:${l}px">`).join("");

    // Letras das colunas
    let letras = `<th class="h-[18px] p-0 bg-[#0a0a0a] border-r border-[#484848]"><svg class="ml-auto w-2 h-2" viewBox="0 0 8 8"><path d="M8 0v8H0z" fill="#707070"/></svg></th>`;
    for (let c = 0; c < larguras.length - 1; c++) {
        const fundo = c === 4 ? "bg-[#666666]" : "bg-[#0a0a0a]";
        letras += `<th class="h-[18px] p-0 font-normal text-[12px] text-[#d8d8d8] border-r border-[#484848] ${fundo}">${String.fromCharCode(65 + c)}</th>`;
    }
    document.getElementById("letras").innerHTML = `<tr>${letras}</tr>`;

    const numeroLinha = n => `<th class="p-0 font-normal border-r border-b border-[#484848] ${n === 1 ? "bg-[#666666] text-white" : "bg-[#0a0a0a] text-[#d8d8d8]"}">${n}</th>`;
    const vazias = () => `<td class="p-0 border-r border-b border-[#e1e1e1]"></td>`.repeat(larguras.length - 9);

    // Cabeçalho da tabela
    let html = `<tr class="h-[18px]">${numeroLinha(1)}`;
    titulos.forEach((t, c) => {
        const sel = c === 4;
        html += `<th class="p-0 bg-[#70ad47] text-white font-bold ${sel ? "relative outline-2 -outline-offset-1 outline-[#107c41]" : ""}">
            <div class="h-[18px] pl-[2px] pr-px flex items-center justify-between">${t}
                <button class="w-[14px] h-[14px] shrink-0 flex items-center justify-center border border-[#c0c4d0] bg-[#f8f8fc]" aria-label="Filtrar ${t}"><svg class="w-2 h-1" viewBox="0 0 8 4"><path d="M1 0h6L4 4z" fill="#606060"/></svg></button>
            </div>${sel ? `<span class="absolute -right-[2px] -bottom-[2px] w-[5px] h-[5px] bg-[#107c41]"></span>` : ""}</th>`;
    });
    html += `${vazias()}</tr>`;

    // Linhas em faixas
    vendas.forEach((v, i) => {
        const faixa = i % 2 === 0;
        html += `<tr class="${i % 9 === 4 ? "h-[17px]" : "h-[18px]"} text-[12px] leading-[15px]">${numeroLinha(i + 2)}`;
        for (let c = 0; c < 8; c++) {
            let borda = faixa ? "border-b border-b-[#a9d08e] bg-[#e2efda]" : "border-b border-b-[#a9d08e] border-r border-r-[#e1e1e1]";
            if (c === 7) borda = faixa ? "border-b border-r border-[#a9d08e] bg-[#e2efda]" : "border-b border-r border-[#a9d08e]";
            html += `<td class="p-0 ${borda} ${direita.includes(c) ? "text-right pr-px" : "pl-[2px]"}">${v[c] || ""}</td>`;
        }
        html += `${vazias()}</tr>`;
    });
    document.getElementById("linhas").innerHTML = html;
</script>
</body>
</html>
